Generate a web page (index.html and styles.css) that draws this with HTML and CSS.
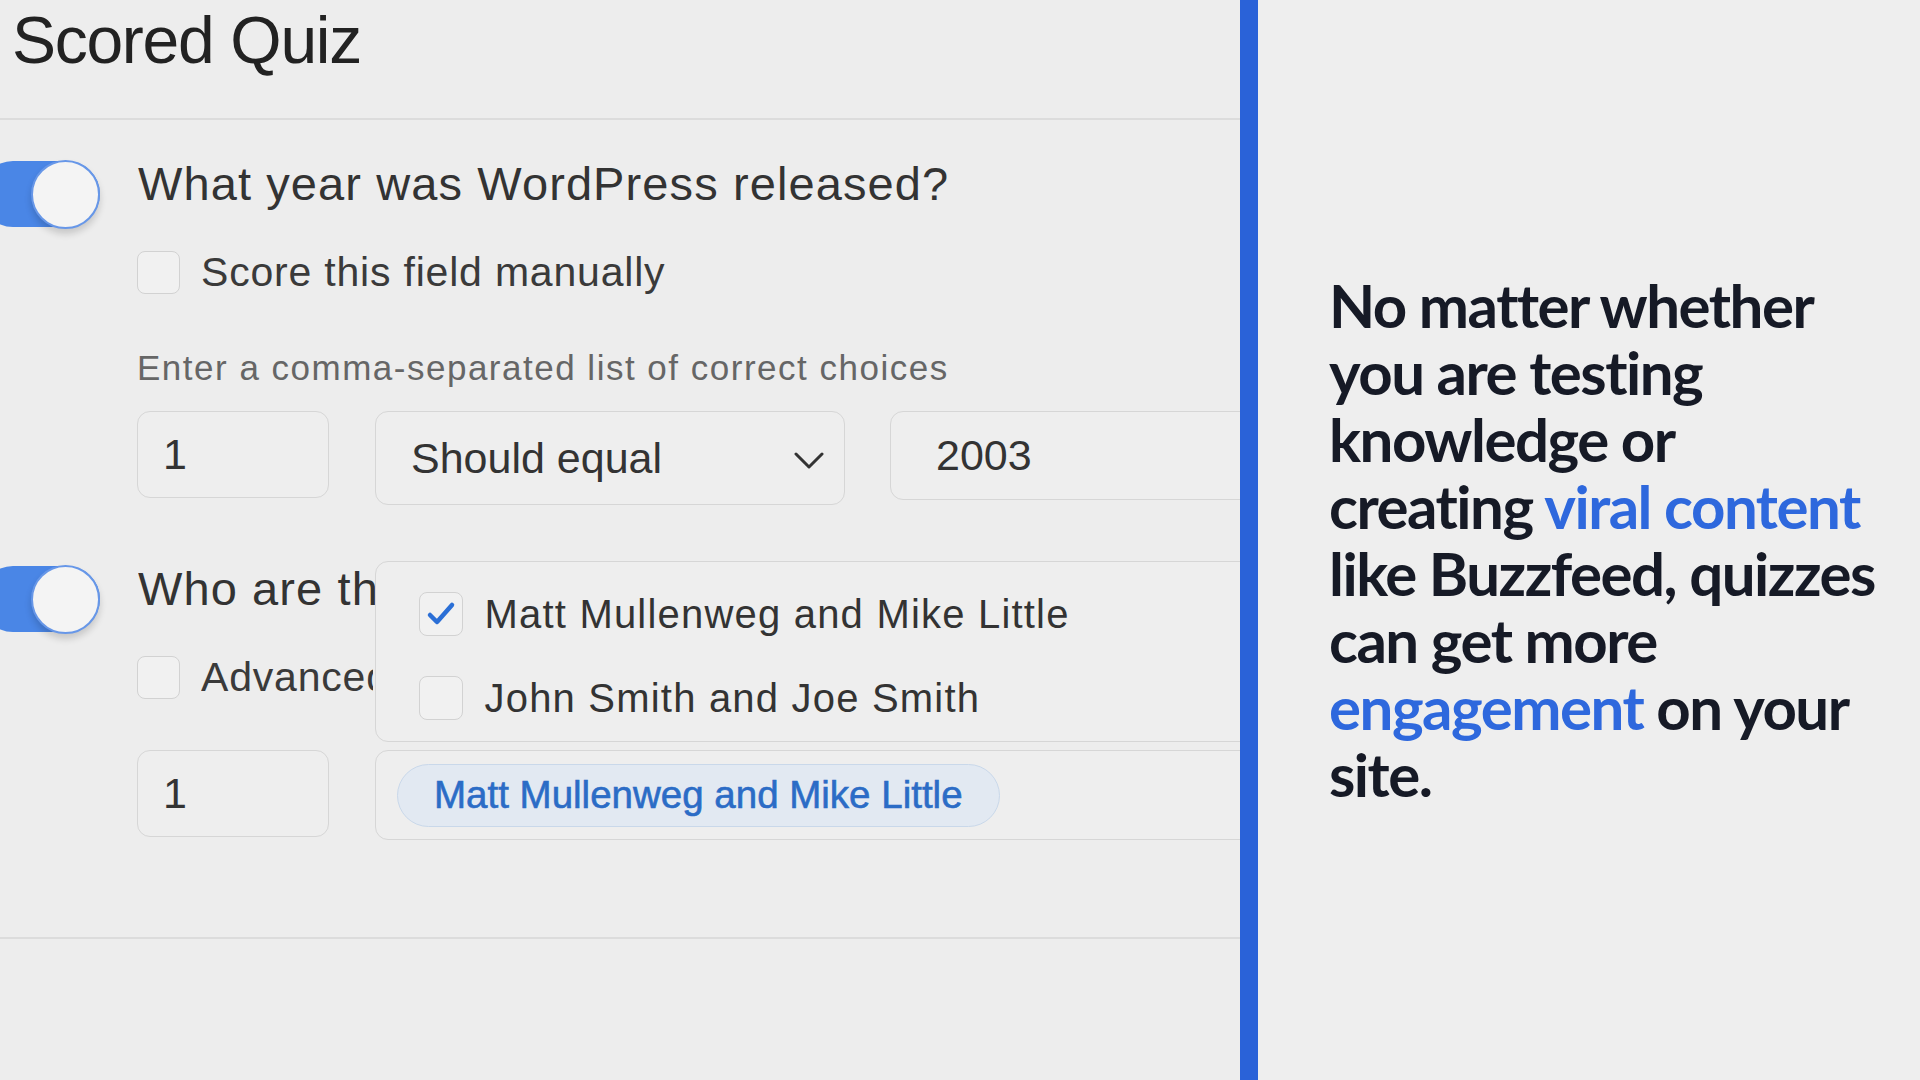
FILE: index.html
```html
<!DOCTYPE html>
<html lang="en">
<head>
<meta charset="utf-8">
<title>Scored Quiz</title>
<link rel="stylesheet" href="styles.css">
</head>
<body>
<main class="editor">
  <h1 class="title">Scored Quiz</h1>
  <div class="questions">
    <section class="question">
      <div class="q-head">
        <span class="toggle"><span class="knob"></span></span>
        <span class="q-text">What year was WordPress released?</span>
      </div>
      <div class="q-body">
        <label class="check-row">
          <span class="checkbox"></span>
          <span class="check-text">Score this field manually</span>
        </label>
        <div class="hint">Enter a comma-separated list of correct choices</div>
        <div class="fields">
          <div class="field field-points"><span class="val">1</span></div>
          <div class="field field-select"><span class="val">Should equal</span>
            <svg class="chev" width="30" height="18" viewBox="0 0 30 18"><path d="M2 2 L15 15 L28 2" fill="none" stroke="#333" stroke-width="3" stroke-linecap="round" stroke-linejoin="round"/></svg>
          </div>
          <div class="field field-answer"><span class="val">2003</span></div>
        </div>
      </div>
    </section>
    <section class="question question-2">
      <div class="q-head">
        <span class="toggle"><span class="knob"></span></span>
        <span class="q-text q-text-clip">Who are the founders of WordPress?</span>
      </div>
      <div class="q-body">
        <label class="check-row">
          <span class="checkbox"></span>
          <span class="check-text check-text-clip">Advanced scoring options</span>
        </label>
        <div class="fields fields-2">
          <div class="field field-points field-points-2"><span class="val">1</span></div>
          <div class="field field-tags">
            <span class="pill">Matt Mullenweg and Mike Little</span>
            <div class="dropdown">
              <div class="option">
                <span class="checkbox checked"><svg width="34" height="28" viewBox="0 0 34 28"><path d="M6 15 L13 22 L28 5" fill="none" stroke="#2b6fd6" stroke-width="4.5" stroke-linecap="round" stroke-linejoin="round"/></svg></span>
                <span class="opt-text">Matt Mullenweg and Mike Little</span>
              </div>
              <div class="option">
                <span class="checkbox"></span>
                <span class="opt-text">John Smith and Joe Smith</span>
              </div>
            </div>
          </div>
        </div>
      </div>
    </section>
  </div>
</main>
<div class="divider"></div>
<aside class="aside">
  <p class="pitch">No matter whether<br>you are testing<br>knowledge or<br>creating <span class="hl">viral content</span><br>like Buzzfeed, quizzes<br>can get more<br><span class="hl">engagement</span> on your<br>site.</p>
</aside>
</body>
</html>
```

FILE: styles.css
```css
html, body {
  margin: 0;
  padding: 0;
}
body {
  width: 1920px;
  height: 1080px;
  display: flex;
  background: #ededed;
  overflow: hidden;
  font-family: "Liberation Sans", Arial, sans-serif;
}
.editor {
  width: 1240px;
  height: 1080px;
  flex: none;
  overflow: hidden;
  background: #ededed;
}
.title {
  margin: 0;
  padding: 2px 0 40px 12px;
  font-size: 66px;
  line-height: 76px;
  font-weight: 400;
  letter-spacing: -1.3px;
  color: #222;
  border-bottom: 2px solid #dcdcdc;
}
.questions {
  padding-top: 39px;
  padding-bottom: 97px;
  border-bottom: 2px solid #dcdcdc;
}
.question-2 {
  margin-top: 59px;
}
.q-head {
  display: flex;
  align-items: flex-start;
  gap: 38px;
}
.toggle {
  width: 120px;
  height: 66px;
  margin-left: -20px;
  margin-top: 2px;
  border-radius: 33px;
  background: #4a86e6;
  display: flex;
  justify-content: flex-end;
  align-items: center;
  flex: none;
}
.knob {
  width: 65px;
  height: 65px;
  border-radius: 50%;
  background: #f4f4f4;
  border: 2.5px solid #6797e8;
  box-shadow: 0 5px 7px rgba(0, 0, 0, 0.16);
  flex: none;
}
.q-text {
  font-size: 47px;
  line-height: 50px;
  letter-spacing: 1.1px;
  color: #333;
  white-space: nowrap;
}
.q-text-clip {
  width: 237px;
  overflow: hidden;
}
.q-body {
  padding-left: 137px;
}
.check-row {
  display: flex;
  align-items: center;
  gap: 21px;
  margin-top: 23px;
}
.checkbox {
  width: 41px;
  height: 41px;
  border: 1.5px solid #d2d2d2;
  border-radius: 8px;
  background: #f1f1f1;
  flex: none;
  display: flex;
  align-items: center;
  justify-content: center;
}
.check-text {
  font-size: 41px;
  line-height: 44px;
  letter-spacing: 0.8px;
  color: #3a3a3a;
  white-space: nowrap;
}
.check-text-clip {
  width: 172px;
  overflow: hidden;
}
.hint {
  margin-top: 55px;
  font-size: 35px;
  line-height: 38px;
  letter-spacing: 1.5px;
  color: #666;
  white-space: nowrap;
}
.fields {
  display: flex;
  align-items: flex-start;
  gap: 46px;
  margin-top: 24px;
}
.fields-2 {
  margin-top: 51px;
}
.field {
  box-sizing: border-box;
  border: 1.5px solid #d6d6d6;
  border-radius: 13px;
  background: #eeeeee;
  display: flex;
  align-items: center;
  flex: none;
  font-size: 43px;
  color: #333;
}
.field-points {
  width: 192px;
  height: 87px;
  padding-left: 25px;
}
.field-select {
  width: 470px;
  height: 94px;
  padding: 0 20px 0 35px;
  justify-content: space-between;
}
.chev {
  margin-top: 6px;
}
.field-answer {
  width: 420px;
  height: 89px;
  margin-left: -1px;
  padding-left: 45px;
}
.field-tags {
  position: relative;
  width: 900px;
  height: 90px;
  padding-left: 21px;
}
.pill {
  box-sizing: border-box;
  height: 63px;
  padding: 0 36px;
  border: 1.5px solid #c9d8ea;
  border-radius: 32px;
  background: #e2e9f2;
  color: #2b6cc6;
  font-size: 38.5px;
  font-weight: 400;
  -webkit-text-stroke: 0.6px #2b6cc6;
  display: flex;
  align-items: center;
  white-space: nowrap;
}
.dropdown {
  position: absolute;
  left: -1.5px;
  bottom: calc(100% + 9px);
  width: 900px;
  box-sizing: border-box;
  padding: 30px 0 21px 43px;
  border: 1.5px solid #d6d6d6;
  border-radius: 13px;
  background: #eeeeee;
  display: flex;
  flex-direction: column;
  gap: 40px;
}
.option {
  display: flex;
  align-items: center;
  gap: 22px;
}
.option .checkbox {
  width: 42px;
  height: 42px;
}
.opt-text {
  font-size: 40px;
  line-height: 44px;
  letter-spacing: 1.2px;
  color: #333;
  white-space: nowrap;
}
.divider {
  width: 18px;
  height: 1080px;
  flex: none;
  background: #2a62d8;
}
.aside {
  flex: 1;
  display: flex;
  align-items: center;
  padding-left: 71px;
  background: #eeeeee;
}
.pitch {
  margin: 0;
  font-family: Lato, "Open Sans", sans-serif;
  font-weight: 700;
  font-size: 60px;
  line-height: 67px;
  letter-spacing: -1.5px;
  color: #161a26;
  white-space: nowrap;
}
.hl {
  color: #2e68dd;
}
```
